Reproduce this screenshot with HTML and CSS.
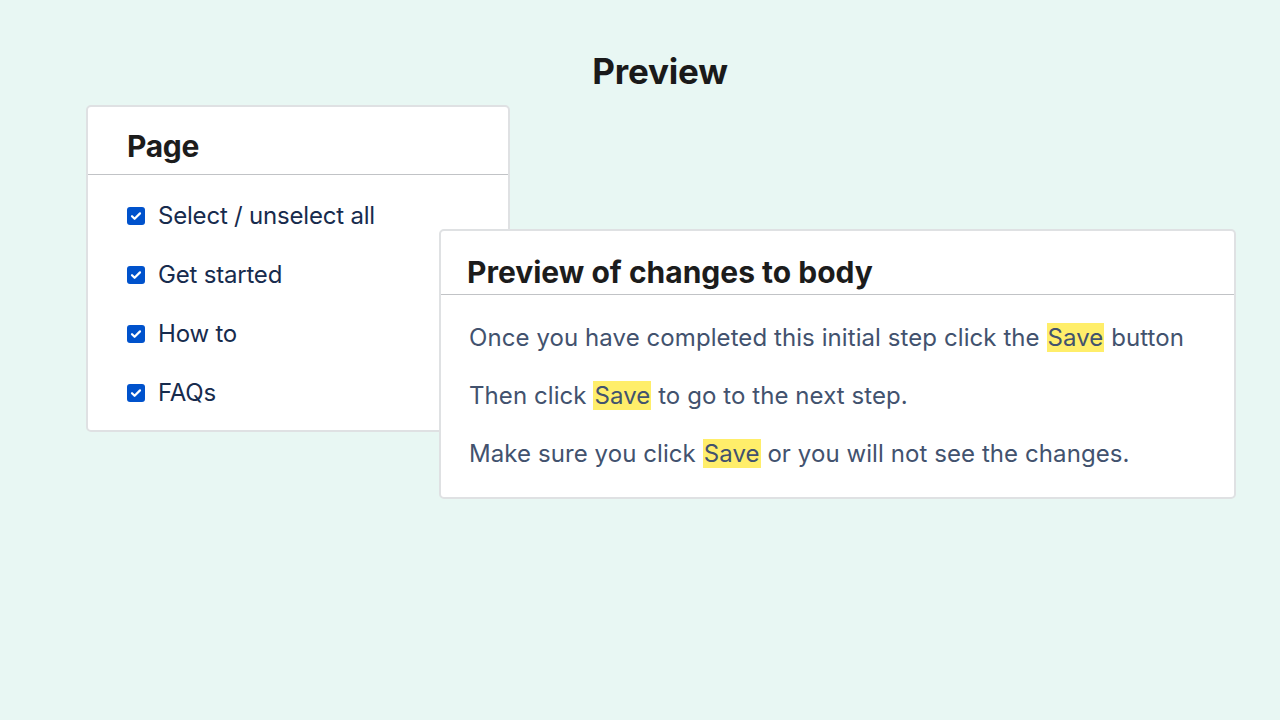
FILE: index.html
```html
<!DOCTYPE html>
<html>
<head>
<meta charset="utf-8">
<link rel="stylesheet" href="styles.css">
</head>
<body>
<main class="stage">
  <h1 class="title">Preview</h1>
  <div class="canvas">
    <section class="card page-card">
      <header class="card-head"><h2>Page</h2></header>
      <ul class="checks">
        <li><span class="box"><svg viewBox="0 0 18 18" width="18" height="18"><path d="M5 9.2l2.6 2.6L13 6.4" fill="none" stroke="#fff" stroke-width="2.2" stroke-linecap="round" stroke-linejoin="round"/></svg></span>Select / unselect all</li>
        <li><span class="box"><svg viewBox="0 0 18 18" width="18" height="18"><path d="M5 9.2l2.6 2.6L13 6.4" fill="none" stroke="#fff" stroke-width="2.2" stroke-linecap="round" stroke-linejoin="round"/></svg></span>Get started</li>
        <li><span class="box"><svg viewBox="0 0 18 18" width="18" height="18"><path d="M5 9.2l2.6 2.6L13 6.4" fill="none" stroke="#fff" stroke-width="2.2" stroke-linecap="round" stroke-linejoin="round"/></svg></span>How to</li>
        <li><span class="box"><svg viewBox="0 0 18 18" width="18" height="18"><path d="M5 9.2l2.6 2.6L13 6.4" fill="none" stroke="#fff" stroke-width="2.2" stroke-linecap="round" stroke-linejoin="round"/></svg></span>FAQs</li>
      </ul>
    </section>
    <section class="card diff-card">
      <header class="card-head diff-head"><h2>Preview of changes to body</h2></header>
      <div class="diff-body">
        <p>Once you have completed this initial step click the <mark>Save</mark> button</p>
        <p>Then click <mark>Save</mark> to go to the next step.</p>
        <p>Make sure you click <mark>Save</mark> or you will not see the changes.</p>
      </div>
    </section>
  </div>
</main>
</body>
</html>
```

FILE: styles.css
```css
* { box-sizing: border-box; }
html, body { margin: 0; padding: 0; }
body {
  width: 1280px;
  height: 720px;
  background: #e8f7f3;
  font-family: Inter, "Noto Sans", sans-serif;
  overflow: hidden;
}
.stage {
  padding-top: 50px;
}
.title {
  margin: 0;
  padding-left: 40px;
  text-align: center;
  font-size: 35px;
  line-height: 42px;
  font-weight: 700;
  color: #1a1a1a;
  letter-spacing: -0.2px;
}
.canvas {
  position: relative;
  margin-top: 13px;
  margin-left: 86px;
}
.card {
  background: #fff;
  border: 2px solid #dfe1e3;
  border-radius: 5px;
}
.page-card {
  width: 424px;
  height: 327px;
}
.card-head {
  border-bottom: 1px solid #c1c3c6;
  padding-left: 39px;
  height: 68px;
  display: flex;
  align-items: flex-end;
  padding-bottom: 8px;
}
.card-head h2 {
  margin: 0;
  font-size: 30px;
  line-height: 40px;
  font-weight: 700;
  color: #1c1c1c;
  letter-spacing: -0.3px;
}
.checks {
  list-style: none;
  margin: 0;
  padding: 24px 0 0 39px;
  display: flex;
  flex-direction: column;
  gap: 25px;
}
.checks li {
  display: flex;
  align-items: center;
  gap: 13px;
  font-size: 24px;
  line-height: 34px;
  color: #172b4d;
  letter-spacing: -0.2px;
}
.box {
  width: 18px;
  height: 18px;
  border-radius: 3px;
  background: #0052cc;
  display: flex;
}
.diff-card {
  position: absolute;
  left: 353px;
  top: 124px;
  width: 797px;
  height: 270px;
}
.diff-head {
  padding-left: 26px;
  height: 64px;
  padding-bottom: 2px;
}
.diff-head h2 {
  letter-spacing: 0;
}
.diff-body {
  padding: 26px 0 0 28px;
  display: flex;
  flex-direction: column;
  gap: 24px;
}
.diff-body p {
  margin: 0;
  font-size: 24px;
  line-height: 34px;
  color: #42526e;
  letter-spacing: 0.08px;
}
mark {
  background: #ffee6a;
  color: #42526e;
  padding: 0 1px;
}
```
